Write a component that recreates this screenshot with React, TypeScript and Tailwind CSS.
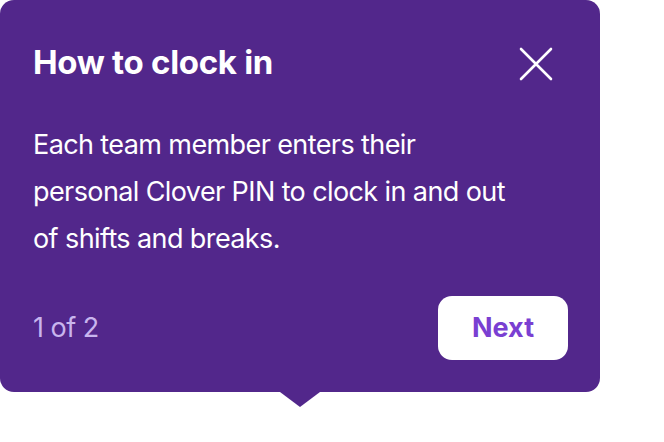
import React from "react";

const font = { fontFamily: "Inter, 'Noto Sans', sans-serif" };

const CloseIcon: React.FC = () => (
  <svg width="34" height="34" viewBox="0 0 34 34" fill="none">
    <path
      d="M2 2L32 32M32 2L2 32"
      stroke="white"
      strokeWidth="2.6"
      strokeLinecap="round"
    />
  </svg>
);

const App: React.FC = () => {
  return (
    <div className="w-[664px] h-[442px] bg-white" style={font}>
      <div className="relative w-[600px] h-[392px] rounded-[14px] bg-[#52278b] flex flex-col px-[33px] pt-[38px] pb-[32px]">
        <div className="flex items-center justify-between h-[50px]">
          <h1 className="text-[33px] font-bold text-white tracking-[-0.3px]">
            How to clock in
          </h1>
          <button className="mr-[14px] mt-[2px]">
            <CloseIcon />
          </button>
        </div>

        <p className="mt-[33px] text-[27px] leading-[47px] text-white tracking-[-0.6px]">
          Each team member enters their
          <br />
          personal Clover PIN to clock in and out
          <br />
          of shifts and breaks.
        </p>

        <div className="mt-auto flex items-center justify-between">
          <span className="text-[27px] text-[#c8b5ee] tracking-[-0.5px]">
            1 of 2
          </span>
          <button className="w-[130px] h-[64px] -mr-[1px] rounded-[14px] bg-white text-[27px] font-bold text-[#7a3fd2]">
            Next
          </button>
        </div>

        <div className="absolute left-[280px] top-full w-0 h-0 border-l-[20px] border-r-[20px] border-t-[15px] border-l-transparent border-r-transparent border-t-[#52278b]" />
      </div>
    </div>
  );
};

export default App;
